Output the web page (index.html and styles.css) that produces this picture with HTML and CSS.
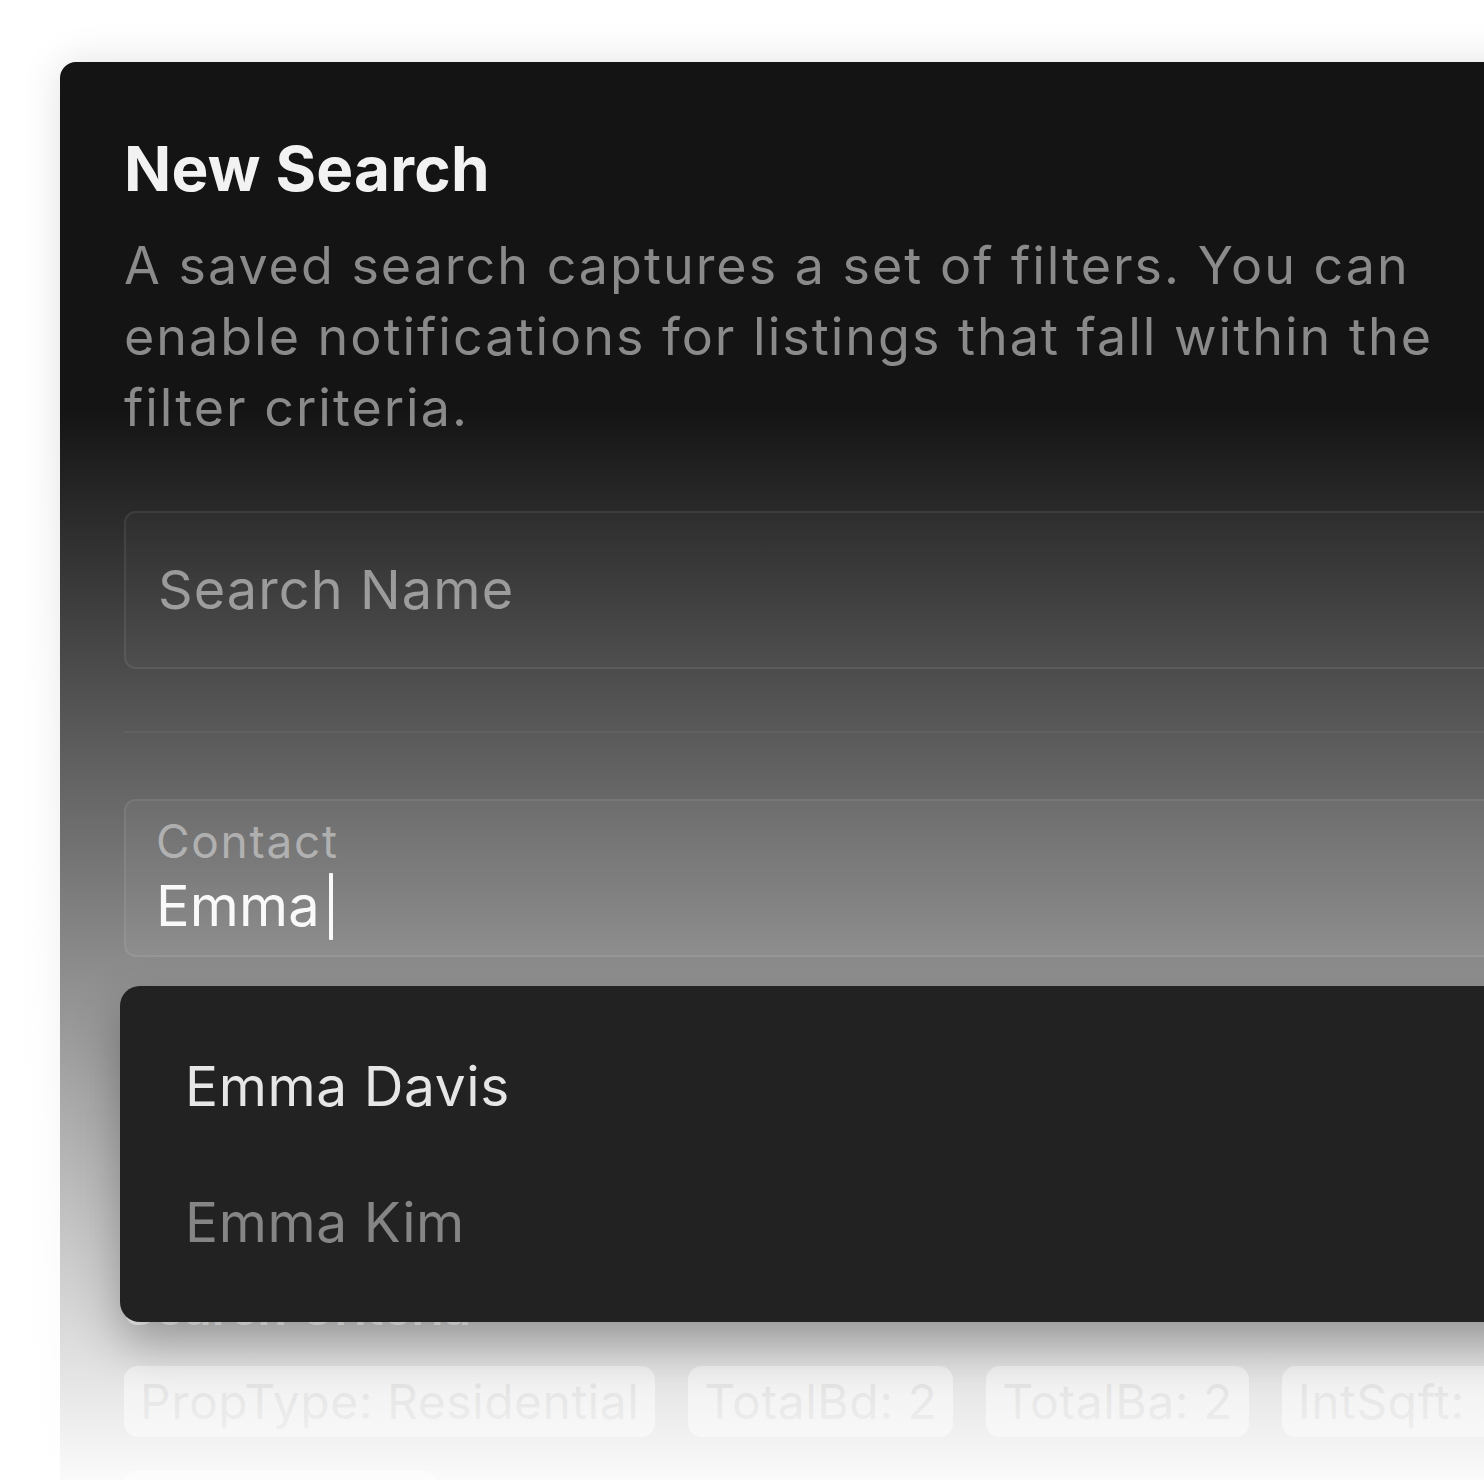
FILE: index.html
```html
<!DOCTYPE html>
<html lang="en">
<head>
<meta charset="utf-8">
<title>New Search</title>
<link rel="stylesheet" href="styles.css">
</head>
<body>
<div class="stage">
  <div class="modal">
    <h1 class="title">New Search</h1>
    <p class="desc">A saved search captures a set of filters. You can enable notifications for listings that fall within the filter criteria.</p>
    <div class="field field-name">
      <span class="placeholder">Search Name</span>
    </div>
    <hr class="divider">
    <div class="contact-wrap">
      <div class="field field-contact">
        <span class="label">Contact</span>
        <span class="value">Emma<span class="caret"></span></span>
      </div>
      <ul class="dropdown">
        <li class="option option-active">Emma Davis</li>
        <li class="option">Emma Kim</li>
      </ul>
    </div>
    <h2 class="section">Search Criteria</h2>
    <div class="chips">
      <span class="chip">PropType: Residential</span>
      <span class="chip">TotalBd: 2</span>
      <span class="chip">TotalBa: 2</span>
      <span class="chip">IntSqft: &gt;1000</span>
      <span class="chip">City: Seattle</span>
    </div>
  </div>
  <div class="fade"></div>
</div>
</body>
</html>
```

FILE: styles.css
```css
* { box-sizing: border-box; }

html, body {
  margin: 0;
  padding: 0;
  background: #ffffff;
  width: 1484px;
  height: 1480px;
  overflow: hidden;
  font-family: Inter, "Noto Sans", "Liberation Sans", sans-serif;
}

.stage {
  position: relative;
  width: 1484px;
  height: 1480px;
  overflow: hidden;
  padding: 62px 0 0 60px;
}

.modal {
  position: relative;
  width: 1900px;
  height: 1500px;
  background: #141414;
  border-radius: 16px;
  padding: 70px 64px 0 64px;
  box-shadow: 0 0 40px rgba(0, 0, 0, 0.12);
}

.title {
  margin: 0;
  font-size: 62px;
  line-height: 74px;
  font-weight: 700;
  letter-spacing: 0.2px;
  color: #f2f2f2;
}

.desc {
  margin: 24px 0 0 0;
  max-width: 1380px;
  font-size: 52px;
  line-height: 71px;
  font-weight: 400;
  letter-spacing: 2px;
  color: #8a8a8a;
}

.field {
  width: 1500px;
  height: 158px;
  border: 2px solid rgba(255, 255, 255, 0.075);
  border-radius: 12px;
  background: rgba(255, 255, 255, 0.02);
}

.field-name {
  margin-top: 68px;
  display: flex;
  align-items: center;
  padding-left: 32px;
}

.placeholder {
  font-size: 54px;
  line-height: 64px;
  letter-spacing: 1.1px;
  color: #888888;
}

.divider {
  margin: 62px 0 0 0;
  width: 1500px;
  height: 2px;
  border: 0;
  background: rgba(255, 255, 255, 0.05);
}

.contact-wrap {
  position: relative;
  margin-top: 66px;
}

.field-contact {
  display: flex;
  flex-direction: column;
  padding: 9px 0 0 30px;
  background: rgba(255, 255, 255, 0.035);
}

.label {
  font-size: 46px;
  line-height: 62px;
  letter-spacing: 1.7px;
  color: #7c7c7c;
}

.value {
  display: flex;
  align-items: center;
  font-size: 56px;
  line-height: 68px;
  letter-spacing: 0.2px;
  color: #f4f4f4;
}

.caret {
  display: inline-block;
  width: 4px;
  height: 67px;
  margin-left: 9px;
  background: #f4f4f4;
  border-radius: 1px;
}

.dropdown {
  position: absolute;
  z-index: 2;
  top: calc(100% + 29px);
  left: -4px;
  width: 1520px;
  margin: 0;
  padding: 32px 0;
  list-style: none;
  background: #222222;
  border-radius: 20px;
  box-shadow: 0 22px 48px rgba(0, 0, 0, 0.3);
}

.option {
  height: 136px;
  display: flex;
  align-items: center;
  padding-left: 65px;
  font-size: 55px;
  letter-spacing: 0.6px;
  color: #e6e6e6;
}

.option + .option {
  color: #858585;
}

.section {
  margin: 322px 0 0 0;
  font-size: 48px;
  line-height: 58px;
  font-weight: 600;
  color: #f4f4f4;
}

.chips {
  margin-top: 29px;
  display: flex;
  flex-wrap: wrap;
  gap: 33px;
  width: 1700px;
}

.chip {
  height: 71px;
  display: flex;
  align-items: center;
  padding: 0 16px;
  border-radius: 14px;
  background: rgba(255, 255, 255, 0.5);
  font-size: 48px;
  letter-spacing: 0.5px;
  color: #000000;
}

.fade {
  position: absolute;
  z-index: 1;
  top: 0;
  left: 0;
  width: 1484px;
  height: 1480px;
  pointer-events: none;
  background: linear-gradient(to bottom, rgba(255, 255, 255, 0) 410px, #ffffff 1500px);
}
```
